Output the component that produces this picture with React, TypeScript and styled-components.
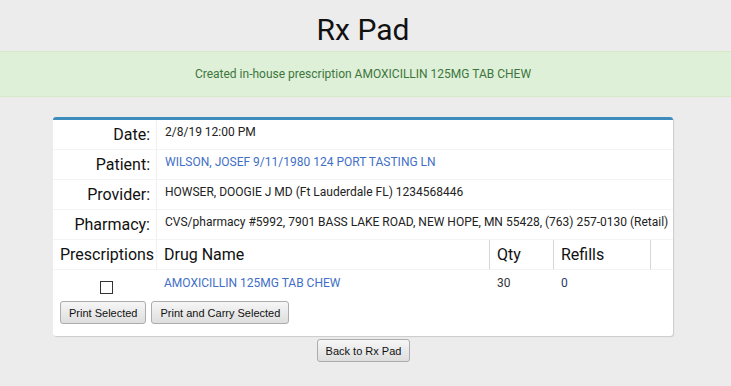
import React from "react";
import styled, { createGlobalStyle } from "styled-components";

const GlobalStyle = createGlobalStyle`
  html, body { margin: 0; padding: 0; background: #ececec; }
  body { font-family: Roboto, "Noto Sans", Arial, sans-serif; color: #333; }
`;

const Page = styled.div`
  width: 726px;
  display: flex;
  flex-direction: column;
`;

const Title = styled.h1`
  margin: 0;
  padding: 12px 0 4px;
  text-align: center;
  font-family: Roboto, sans-serif;
  font-weight: 400;
  font-size: 30px;
  line-height: 35px;
  color: #111;
`;

const Banner = styled.div`
  margin: 0 -5px 0 0;
  background: #dff0d8;
  border-top: 1px solid #d6e9c6;
  border-bottom: 1px solid #d6e9c6;
  color: #3c763d;
  font-size: 12px;
  line-height: 16px;
  padding: 14px 5px 14px 0;
  text-align: center;
`;

const Card = styled.div`
  margin: 20px 53px 0;
  background: #fff;
  border-top: 3px solid #3c8dbc;
  border-radius: 3px;
  box-shadow: 1px 1px 1px rgba(0, 0, 0, 0.14);
  padding-bottom: 12px;
`;

const Grid = styled.div`
  display: grid;
  grid-template-columns: 104px 333px 64px 97px 1fr;
`;

const Label = styled.div`
  height: 30px;
  box-sizing: border-box;
  padding: 4px 6px 0 0;
  text-align: right;
  font-size: 16px;
  line-height: 22px;
  color: #111;
  border-right: 1px solid #f0f0f0;
  border-bottom: 1px solid #f4f4f4;
`;

const Value = styled.div<{ $link?: boolean }>`
  grid-column: span 4;
  height: 30px;
  box-sizing: border-box;
  padding: 4px 8px 0;
  font-size: 12px;
  line-height: 17px;
  color: ${(p) => (p.$link ? "#3f6fc6" : "#222")};
  border-bottom: 1px solid #f4f4f4;
  white-space: nowrap;
`;

const Head = styled.div<{ $center?: boolean; $divider?: string }>`
  height: 30px;
  box-sizing: border-box;
  padding: 4px 7px 0;
  font-size: 16px;
  line-height: 22px;
  color: #111;
  text-align: ${(p) => (p.$center ? "center" : "left")};
  border-bottom: 1px solid #f4f4f4;
  border-right: 1px solid ${(p) => p.$divider ?? "transparent"};
  white-space: nowrap;
`;

const Cell = styled.div<{ $color?: string; $center?: boolean }>`
  height: 30px;
  box-sizing: border-box;
  padding: 6px 7px 0;
  font-size: 12px;
  line-height: 14px;
  color: ${(p) => p.$color ?? "#333"};
  display: flex;
  justify-content: ${(p) => (p.$center ? "center" : "flex-start")};
  white-space: nowrap;
`;

const Check = styled.span`
  display: block;
  margin: 5px 0 0 2px;
  width: 11px;
  height: 11px;
  border: 1px solid #333;
  background: #fff;
`;

const ButtonBar = styled.div`
  display: flex;
  gap: 5px;
  padding: 1px 7px 0;
`;

const Button = styled.button`
  height: 23px;
  box-sizing: border-box;
  padding: 0 8px;
  font-family: "Liberation Sans", Arial, sans-serif;
  font-size: 11px;
  color: #111;
  border: 1px solid #acacac;
  border-radius: 3px;
  background: linear-gradient(#f6f6f6, #dedede);
  cursor: pointer;
`;

const BackBar = styled.div`
  display: flex;
  justify-content: center;
  padding-top: 3px;
  margin-left: 1px;
`;

export default function App() {
  return (
    <>
      <GlobalStyle />
      <Page>
        <Title>Rx Pad</Title>
        <Banner>Created in-house prescription AMOXICILLIN 125MG TAB CHEW</Banner>
        <Card>
          <Grid>
            <Label>Date:</Label>
            <Value>2/8/19 12:00 PM</Value>
            <Label>Patient:</Label>
            <Value $link>WILSON, JOSEF 9/11/1980 124 PORT TASTING LN</Value>
            <Label>Provider:</Label>
            <Value>HOWSER, DOOGIE J MD (Ft Lauderdale FL) 1234568446</Value>
            <Label>Pharmacy:</Label>
            <Value>CVS/pharmacy #5992, 7901 BASS LAKE ROAD, NEW HOPE, MN 55428, (763) 257-0130 (Retail)</Value>
            <Head $center $divider="#f0f0f0">Prescriptions</Head>
            <Head $divider="#d6d6d6">Drug Name</Head>
            <Head $divider="#d6d6d6">Qty</Head>
            <Head $divider="#d6d6d6">Refills</Head>
            <Head />
            <Cell $center>
              <Check />
            </Cell>
            <Cell $color="#3f6fc6">AMOXICILLIN 125MG TAB CHEW</Cell>
            <Cell>30</Cell>
            <Cell $color="#233a6b">0</Cell>
            <Cell />
          </Grid>
          <ButtonBar>
            <Button>Print Selected</Button>
            <Button>Print and Carry Selected</Button>
          </ButtonBar>
        </Card>
        <BackBar>
          <Button>Back to Rx Pad</Button>
        </BackBar>
      </Page>
    </>
  );
}
